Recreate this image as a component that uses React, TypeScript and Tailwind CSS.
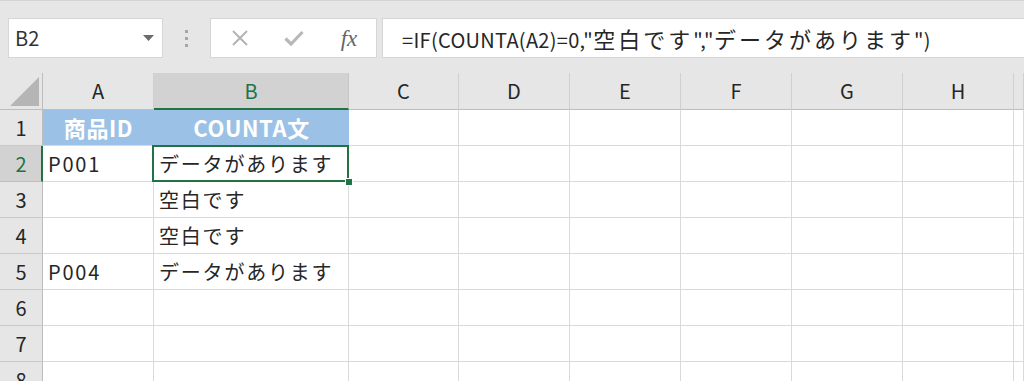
import React from "react";

const COLS = ["A", "B", "C", "D", "E", "F", "G", "H", ""];
const COL_W = [
  "w-[111px]",
  "w-[195px]",
  "w-[110px]",
  "w-[111px]",
  "w-[111px]",
  "w-[111px]",
  "w-[111px]",
  "w-[111px]",
  "flex-1",
];

type Row = { n: number; a?: string; b?: string; head?: boolean };

const ROWS: Row[] = [
  { n: 1, a: "商品ID", b: "COUNTA文", head: true },
  { n: 2, a: "P001", b: "データがあります" },
  { n: 3, b: "空白です" },
  { n: 4, b: "空白です" },
  { n: 5, a: "P004", b: "データがあります" },
  { n: 6 },
  { n: 7 },
  { n: 8 },
];

function Toolbar() {
  return (
    <div className="h-[73px] shrink-0 border-t border-[#d4d4d4] flex items-start pt-[17px] pl-2 gap-0">
      <div className="w-[155px] h-[40px] bg-white border border-[#d6d6d6] flex items-center justify-between pl-[6px] pr-[8px]">
        <span className="text-[20px] text-[#333]">B2</span>
        <svg width="11" height="6" viewBox="0 0 11 6">
          <path d="M0 0h11L5.5 6z" fill="#6b6b6b" />
        </svg>
      </div>
      <div className="w-[47px] h-[40px] flex flex-col items-center justify-center gap-[4px]">
        <span className="w-[3px] h-[3px] bg-[#a6a6a6]" />
        <span className="w-[3px] h-[3px] bg-[#a6a6a6]" />
        <span className="w-[3px] h-[3px] bg-[#a6a6a6]" />
      </div>
      <div className="w-[167px] h-[40px] bg-white border border-[#d6d6d6] flex items-center">
        <div className="w-[55px] flex justify-center pl-[2px]">
          <svg width="18" height="18" viewBox="0 0 18 18">
            <path d="M2 2l14 14M16 2L2 16" stroke="#b3b3b3" strokeWidth="2" fill="none" />
          </svg>
        </div>
        <div className="w-[56px] flex justify-center">
          <svg width="20" height="16" viewBox="0 0 20 16">
            <path d="M1.5 8.5l5.5 5.5L18.5 2" stroke="#b8b8b8" strokeWidth="3.2" fill="none" />
          </svg>
        </div>
        <div className="flex-1 flex justify-center">
          <span className="font-[family-name:'Liberation_Serif',serif] italic text-[23px] text-[#666] leading-none">
            fx
          </span>
        </div>
      </div>
      <div className="ml-[5px] flex-1 h-[40px] bg-white border border-[#d6d6d6] border-r-0 flex items-center pl-[19px]">
        <span className="text-[20px] text-[#262626] tracking-[0.3px] whitespace-nowrap">
          =IF(COUNTA(A2)=0,"
          <span className="text-[22px] tracking-[3px]">空白です</span>","
          <span className="text-[22px] tracking-[3px]">データがあります</span>")
        </span>
      </div>
    </div>
  );
}

function ColumnHeader() {
  return (
    <div className="flex h-[37px] shrink-0">
      <div className="w-[43px] shrink-0 border-r border-b border-[#bdbdbd] flex items-end justify-end pb-[2px] pr-[2px]">
        <svg width="31" height="31" viewBox="0 0 31 31">
          <path d="M30 1V30H1z" fill="#b5b5b5" />
        </svg>
      </div>
      {COLS.map((c, i) =>
        c === "B" ? (
          <div
            key={i}
            className={`${COL_W[i]} shrink-0 bg-[#d2d2d2] border-r border-[#c6c6c6] border-b-2 border-b-[#217346] flex items-center justify-center text-[20px] text-[#217346]`}
          >
            {c}
          </div>
        ) : (
          <div
            key={i}
            className={`${COL_W[i]} shrink-0 border-r border-[#d0d0d0] border-b border-b-[#bdbdbd] flex items-center justify-center text-[20px] text-[#262626]`}
          >
            {c}
          </div>
        ),
      )}
    </div>
  );
}

function GridRow({ row }: { row: Row }) {
  const selected = row.n === 2;
  return (
    <div className={`flex h-[36px] shrink-0 ${selected ? "relative z-10" : ""}`}>
      {selected ? (
        <div className="w-[43px] shrink-0 bg-[#d2d2d2] border-r-2 border-[#217346] border-b border-b-[#c0c0c0] flex items-center justify-center text-[20px] text-[#217346] pl-[1px]">
          {row.n}
        </div>
      ) : (
        <div className="w-[43px] shrink-0 border-r border-[#bdbdbd] border-b border-b-[#c8c8c8] flex items-center justify-center text-[20px] text-[#262626]">
          {row.n}
        </div>
      )}
      {COLS.map((_, i) => {
        const text = i === 0 ? row.a : i === 1 ? row.b : undefined;
        if (row.head && i < 2) {
          return (
            <div
              key={i}
              className={`${COL_W[i]} shrink-0 bg-[#9bc2e6] border-b border-[#d9d9d9] flex items-center justify-center text-[22px] font-bold text-white tracking-[0.6px]`}
            >
              {text}
            </div>
          );
        }
        return (
          <div
            key={i}
            className={`${COL_W[i]} shrink-0 relative bg-white border-r border-b border-[#dadada] flex items-center pl-[5px] text-[20px] text-[#262626] tracking-[1.8px] whitespace-nowrap`}
          >
            {text}
            {selected && i === 1 && (
              <>
                <span className="absolute z-10 -left-[2px] -top-[1px] -right-[1px] -bottom-[1px] border-2 border-[#217346]" />
                <span className="absolute z-20 -right-[5px] -bottom-[5px] w-[8px] h-[8px] bg-[#217346] border border-white" />
              </>
            )}
          </div>
        );
      })}
    </div>
  );
}

export default function App() {
  return (
    <div className="w-[1024px] h-[381px] overflow-hidden bg-[#e6e6e6] flex flex-col font-[family-name:'Noto_Sans_CJK_JP',sans-serif]">
      <Toolbar />
      <ColumnHeader />
      {ROWS.map((r) => (
        <GridRow key={r.n} row={r} />
      ))}
    </div>
  );
}
